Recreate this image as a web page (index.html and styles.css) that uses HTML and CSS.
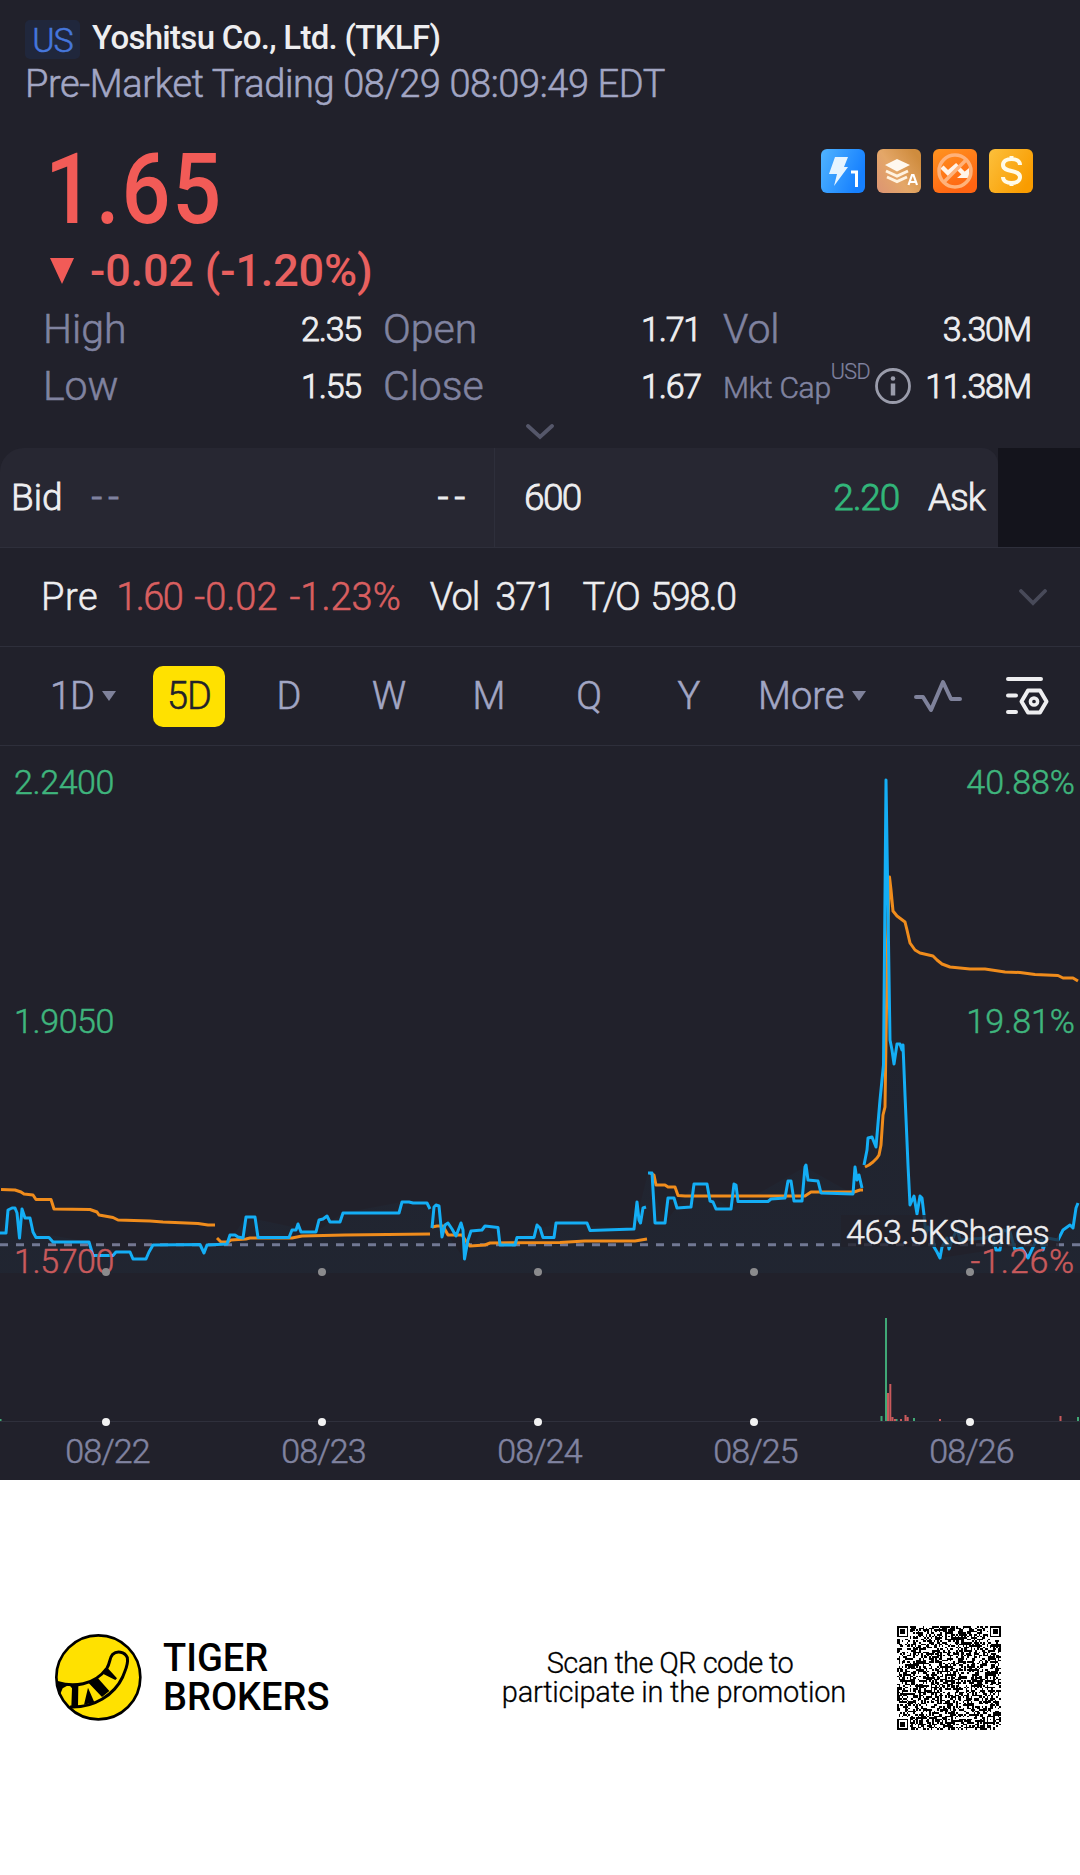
FILE: index.html
```
<!DOCTYPE html>
<html lang="en">
<head>
  <meta charset="UTF-8" />
  <meta name="viewport" content="width=device-width, initial-scale=1.0" />
  <title>Yoshitsu Co., Ltd. (TKLF)</title>
  <link rel="stylesheet" href="styles.css">
</head>
<body>
  <div class="app">
    <div class="header">
      <div class="title-row">
        <span class="market">US</span>
        <h1>Yoshitsu Co., Ltd. (TKLF)</h1>
      </div>
      <div class="session">Pre-Market Trading 08/29 08:09:49 EDT</div>
    </div>

    <div class="quote">
      <div>
        <div class="price">1.65</div>
        <div class="change">
          <svg width="24" height="26" viewBox="0 0 24 26"><path d="M0 0h24L12 26z" fill="#f25b57"/></svg>
          <span>-0.02 (-1.20%)</span>
        </div>
      </div>
      <div class="badges">
        <svg width="44" height="44" viewBox="0 0 44 44">
          <defs>
            <linearGradient id="blue" x1="0" y1="0" x2="1" y2=".4"><stop offset="0" stop-color="#50b4ff"/><stop offset="1" stop-color="#1680ff"/></linearGradient>
            <linearGradient id="tan" x1="0" y1="1" x2="1" y2=".3"><stop offset="0" stop-color="#dc9474"/><stop offset=".5" stop-color="#e4a768"/><stop offset="1" stop-color="#cf8c3e"/></linearGradient>
            <linearGradient id="orange" x1="0" y1="0" x2=".5" y2="1"><stop offset="0" stop-color="#ff9420"/><stop offset="1" stop-color="#ff6412"/></linearGradient>
            <linearGradient id="gold" x1="0" y1="0" x2="1" y2=".6"><stop offset="0" stop-color="#fcc03c"/><stop offset="1" stop-color="#f99c00"/></linearGradient>
          </defs>
          <rect width="44" height="44" rx="6" fill="url(#blue)"/>
          <path d="M14 8h13l-4 10h4L13 37l3-12H8z" fill="#e6f4ff"/>
          <path d="M30 23h5.500v15" fill="none" stroke="#fff" stroke-width="3"/>
        </svg>
        <svg width="44" height="44" viewBox="0 0 44 44">
          <rect width="44" height="44" rx="6" fill="url(#tan)"/>
          <path d="M20 10l13 6-13 6.500L8 16z" fill="#fff8ee"/>
          <path d="M9 22l11 5 11-5M10 28l10 4.500L30 28" fill="none" stroke="#fff2df" stroke-width="3"/>
          <path d="M31.500 36L35 26h1.500L40 36M33 33h6" fill="none" stroke="#fff" stroke-width="2.200"/>
        </svg>
        <svg width="44" height="44" viewBox="0 0 44 44">
          <rect width="44" height="44" rx="6" fill="url(#orange)"/>
          <path d="M9 18l6 6 8-7 8 8" fill="none" stroke="#fff3e8" stroke-width="4.500"/>
          <path d="M36 19v10H24z" fill="#fff3e8"/>
          <circle cx="22" cy="22" r="16" fill="none" stroke="#ffb27a" stroke-width="3.500"/>
          <path d="M33 11L11 33" stroke="#ffb27a" stroke-width="3.500"/>
        </svg>
        <svg width="44" height="44" viewBox="0 0 44 44">
          <rect width="44" height="44" rx="6" fill="url(#gold)"/>
          <path d="M31 16c0-4-4-6-8.500-6S14 12 14 16c0 8 17 4 17 12 0 4-4 6-8.500 6S14 32 14 28M22.500 7v4M22.500 33v4" fill="none" stroke="#fffbe8" stroke-width="4"/>
        </svg>
      </div>
    </div>

    <div class="stats">
      <div class="stat"><span class="label">High</span><span class="value">2.35</span></div>
      <div class="stat"><span class="label">Open</span><span class="value">1.71</span></div>
      <div class="stat"><span class="label">Vol</span><span class="value">3.30M</span></div>
      <div class="stat"><span class="label">Low</span><span class="value">1.55</span></div>
      <div class="stat"><span class="label">Close</span><span class="value">1.67</span></div>
      <div class="stat">
        <span class="label small">Mkt Cap</span><span class="unit">USD</span>
        <svg class="info" width="36" height="36" viewBox="0 0 36 36"><circle cx="18" cy="18" r="16.500" fill="none" stroke="#9a9cab" stroke-width="2.800"/><circle cx="18" cy="10.500" r="2.300" fill="#9a9cab"/><path d="M18 15.500v12" stroke="#9a9cab" stroke-width="4.500"/></svg>
        <span class="value">11.38M</span>
      </div>
    </div>
    <div class="expand">
      <svg width="28" height="16" viewBox="0 0 28 16"><path d="M2 2l12 11L26 2" fill="none" stroke="#55576a" stroke-width="3.800" stroke-linecap="round"/></svg>
    </div>

    <div class="book">
      <div class="side bid"><span>Bid</span><span class="dim dash">--</span><span class="push dash">--</span></div>
      <div class="side ask"><span class="tight">600</span><span class="push up">2.20</span><span class="ask-label">Ask</span></div>
    </div>

    <div class="pre">
      <span class="pre-label">Pre</span>
      <span class="down tight">1.60</span>
      <span class="down">-0.02</span>
      <span class="down">-1.23%</span>
      <span class="vol">Vol</span>
      <span class="vol-num">371</span>
      <span class="turnover">T/O</span>
      <span class="tight">598.0</span>
      <svg class="push" width="28" height="17" viewBox="0 0 28 17"><path d="M2 2l12 12L26 2" fill="none" stroke="#484a59" stroke-width="3.800" stroke-linecap="round"/></svg>
    </div>

    <div class="tabs">
      <div class="tab first">1D<i class="caret"></i></div>
      <div class="tab"><span class="active">5D</span></div>
      <div class="tab">D</div>
      <div class="tab">W</div>
      <div class="tab">M</div>
      <div class="tab">Q</div>
      <div class="tab">Y</div>
      <div class="tab more">More<i class="caret"></i></div>
      <svg class="wave" width="48" height="34" viewBox="0 0 48 34"><path d="M2 18h7l8 13L29 3l8 17h9" fill="none" stroke="#7f829b" stroke-width="4" stroke-linecap="round" stroke-linejoin="round"/></svg>
      <svg class="settings" width="44" height="40" viewBox="0 0 44 40"><g fill="none" stroke="#eeeef0" stroke-width="4" stroke-linecap="round" stroke-linejoin="round"><path d="M3 3h33M3 19.500h8M3 36h8"/><path d="M23 14.500h12l6.500 11-6.500 11H23l-6.500-11z"/><circle cx="29" cy="25.500" r="3.600" stroke-width="3.500"/></g></svg>
    </div>

    <svg class="chart" width="1080" height="734" viewBox="0 746 1080 734">
      <defs>
        <linearGradient id="fade" gradientUnits="userSpaceOnUse" x1="0" y1="780" x2="0" y2="1273"><stop offset="0" stop-color="#16b0f5" stop-opacity="0"/><stop offset="1" stop-color="#16b0f5" stop-opacity=".03"/></linearGradient>
      </defs>
      <path class="zero" d="M0 1244.700H1080"/>
      <path fill="url(#fade)" d="M0 1233L10 1208 33 1232 89 1242 146 1259 153 1245 227 1245 246 1217 316 1232 343 1213 402 1202 430 1209 464 1259 485 1226 500 1245 556 1223 634 1229 648 1173 665 1223 694 1184 731 1209 805 1167 853 1194 864 1165 880 1100 886 780 890 1040 903 1045 909 1192 926 1235 940 1258 1060 1240 1080 1203V1273H0z"/>
      <!-- average price, one path per session -->
      <g class="avg">
        <path d="M1 1189.500L15 1190 21 1192 24 1194 33 1195 36 1199.500 51 1199.500 54 1209 90 1209.500 97 1212 99 1215 113 1217.500 118 1220 150 1221 163 1222 198 1223.500 208 1225 215 1225"/>
        <path d="M217 1238L221 1242 228 1242 231 1240 246 1239 250 1238 292 1238 302 1236 345 1235 430 1234"/>
        <path d="M432 1227L437 1226 443 1226 448 1235 462 1235 466 1241 470 1246 485 1245 490 1243 560 1242.500 585 1241 635 1241 647 1239"/>
        <path d="M650 1173L654 1175 656 1185 665 1185 668 1187 675 1187 678 1195.500 685 1196 805 1196 811 1192 854 1192 860 1190 863 1190"/>
        <path d="M865 1167L869 1165 873 1162 877 1158 879 1155 881 1145 883 1115 885 1107 887.500 940 889.500 877 891 890 893 911 897 916 905 922 907 930 910 943 915 950 920 953 933 956 937 960 942 964 950 967 970 969 985 969 1005 972 1020 972.500 1035 974.500 1058 975.500 1063 978 1073 978 1078 981"/>
      </g>
      <g class="last">
        <path d="M0 1233L6 1233 8 1210 12 1208 15 1208 17 1213 19.500 1238 22 1209 25 1218 30 1218 33 1232 36 1237.500 49 1237.500 53 1242 89 1242 93 1255.500 113 1255.500 116 1252 130 1252 133 1259 146 1259 149 1252 153 1245 200 1244.500 204 1253 207 1245 227 1244 230 1235 235 1235 238 1237 243 1238 246 1217 255 1217 258 1237.500 289 1237.500 292 1230 296 1230 298 1224 301 1232 316 1232 319 1220 323 1219 327 1216 330 1222 340 1222 343 1213 399 1213 402 1202 409 1202 413 1203 427 1203 430 1209"/>
        <path d="M432 1228L434 1207 436 1205 439 1206 442 1237 445 1225 448 1223 452 1229 456 1236 461 1223 463 1230 464.500 1259 468 1240 471 1231 482 1230 485 1226 498 1227.500 500 1245 515 1245 517 1237.500 534 1237.500 537 1225 540 1228 543 1237.500 554 1237.500 556 1223 587 1223 590 1230.500 634 1229 637 1202 639 1220 640.500 1223 643 1208 646 1207"/>
        <path d="M648 1173L652 1173 655 1223 665 1223 668 1198 674 1198 677 1208 691 1207 694 1184 707 1184 710 1201 713 1202 716 1209 731 1209 734 1184 736 1185 738 1201.500 768 1201.500 771 1199 785 1198 788 1181 791 1181 794 1201 802 1201 805 1167 806 1165 808 1180 818 1181 821 1193 853 1194 855 1167 857 1180 859 1175 862 1188"/>
        <path d="M864 1165L867 1150 868 1138 872 1137 876 1147 880 1100 883.500 1065 886 780 890 1040 892 1050 894 1064 897 1044 900 1044 902 1050 903 1045 905 1095 908 1165 910 1205 914 1196 917 1214 920 1196 922 1198 924 1215 926 1235 928 1227 932 1232 934 1247 937 1252 940 1258 942 1247 947 1238 949 1249 953 1238 957 1229 960 1240 985 1238 993 1235 996 1250 1000 1250 1003 1230 1010 1232 1015 1250 1022 1248 1028 1258 1035 1243 1042 1240 1043 1250 1047 1238 1058 1240 1063 1230 1070 1225 1073 1228 1076 1208 1078 1203"/>
      </g>
      <rect x="841" y="1215" width="218" height="32" fill="#21212b" fill-opacity=".78"/>
      <g class="axis">
        <text class="up" x="14" y="794">2.2400</text>
        <text class="up" x="14" y="1033">1.9050</text>
        <text class="down" x="14" y="1273">1.5700</text>
        <text class="up end" x="1075" y="794">40.88%</text>
        <text class="up end" x="1075" y="1033">19.81%</text>
        <text class="down end wide" x="1075" y="1273">-1.26%</text>
        <text class="shares" x="846" y="1244">463.5KShares</text>
      </g>
      <path d="M0 1421.500H1080" stroke="#2f303c"/>
      <g fill="#8b8b8d">
        <circle cx="106" cy="1272" r="4"/><circle cx="322" cy="1272" r="4"/><circle cx="538" cy="1272" r="4"/><circle cx="754" cy="1272" r="4"/><circle cx="970" cy="1272" r="4"/>
      </g>
      <!-- volume -->
      <path d="M881.500 1421V1416M886 1421V1318M896.500 1421V1419M914 1421V1418M1078 1421V1417M.5 1421V1419" stroke="#40a876" stroke-width="2"/>
      <path d="M888 1421V1393M890.300 1421V1384M892.500 1421V1417M895 1421V1419M901 1421V1419M905.500 1421V1415M907.700 1421V1417M940 1421V1419M1060.500 1421V1416" stroke="#c95a5c" stroke-width="2"/>
      <g fill="#f2f2f2">
        <circle cx="106" cy="1422" r="4"/><circle cx="322" cy="1422" r="4"/><circle cx="538" cy="1422" r="4"/><circle cx="754" cy="1422" r="4"/><circle cx="970" cy="1422" r="4"/>
      </g>
      <g class="dates">
        <text x="107.500" y="1463">08/22</text>
        <text x="323.500" y="1463">08/23</text>
        <text x="539.500" y="1463">08/24</text>
        <text x="755.500" y="1463">08/25</text>
        <text x="971.500" y="1463">08/26</text>
      </g>
    </svg>
  </div>

  <div class="footer">
    <svg width="88" height="88" viewBox="47 43 264 264">
      <circle cx="177" cy="173" r="126" fill="#ffe100" stroke="#000" stroke-width="8"/>
      <path d="M54 188C100 203 165 198 203 145 213 129 210 115 220 104 232 93 256 95 264 114 268 135 258 150 250 172 225 225 165 265 92 262" fill="none" stroke="#000" stroke-width="9"/>
      <path d="M50 185L88 196 70 206 60 230zM88 194L117 196 116 262 96 262 98 206zM146 204L165 248 134 255zM148 190L176 176 210 214 188 232zM186 160L204 144 233 176 228 181z"/>
    </svg>
    <div class="brand"><p>TIGER</p><p>BROKERS</p></div>
    <div class="scan"><p class="first-line">Scan the QR code to</p><p>participate in the promotion</p></div>
    <svg id="qr" width="104" height="104" viewBox="0 0 65 65" shape-rendering="crispEdges"></svg>
  </div>

  <script>
    // 65x65 modules: finders in three corners, alignment marks on a grid, timing on row/col 6
    const N = 65;
    const marks = [6, 32, 58];
    let seed = 829;
    function rnd() {
      seed = (seed * 16807) % 2147483647;
      return seed / 2147483647;
    }
    function finder(x, y, cx, cy) {
      const d = Math.max(Math.abs(x - cx), Math.abs(y - cy));
      return d > 4 ? null : d < 2 || d === 3;
    }
    function dark(x, y) {
      for (const [cx, cy] of [[3, 3], [N - 4, 3], [3, N - 4]]) {
        const f = finder(x, y, cx, cy);
        if (f !== null) return f;
      }
      for (const cx of marks) for (const cy of marks) {
        const d = Math.max(Math.abs(x - cx), Math.abs(y - cy));
        if (d <= 2 && !(cx === 6 && cy !== 32) && !(cy === 6 && cx !== 32)) return d !== 1;
      }
      if (x === 6) return y % 2 === 0;
      if (y === 6) return x % 2 === 0;
      return rnd() < 0.5;
    }
    let d = '';
    for (let y = 0; y < N; y++) {
      for (let x = 0; x < N; x++) {
        if (dark(x, y)) d += `M${x} ${y}h1v1h-1z`;
      }
    }
    document.getElementById('qr').innerHTML = `<path d="${d}"/>`;
  </script>
</body>
</html>
```
FILE: styles.css
```
* { box-sizing: border-box; margin: 0; padding: 0; }
body {
  width: 1080px;
  font-family: Roboto, sans-serif;
  font-weight: 300;
  -webkit-text-stroke: 0.55px;
  background: #fff;
}
svg { display: block; flex: none; }
.app {
  height: 1480px;
  background: #21212b;
  color: #eeeef0;
}
.header {
  padding: 20px 25px 0;
}
.title-row {
  display: flex;
  gap: 12px;
}
.market {
  width: 55px;
  height: 39px;
  border-radius: 5px;
  background: #20273c;
  color: #4677dc;
  font-size: 34px;
  line-height: 41px;
  letter-spacing: -1px;
  text-align: center;
}
h1 {
  font-size: 33px;
  font-weight: 500;
  line-height: 35px;
  letter-spacing: -0.7px;
  -webkit-text-stroke: 0;
}
.session {
  margin-top: 6px;
  font-size: 38px;
  line-height: 38px;
  letter-spacing: -0.4px;
  color: #a2a6c4;
}
.quote {
  display: flex;
  justify-content: space-between;
  height: 197px;
  padding: 37px 47px 0 45px;
}
.price {
  font-size: 98px;
  font-weight: 500;
  line-height: 100px;
  letter-spacing: 2px;
  color: #f25b57;
  transform: scaleX(0.88);
  transform-origin: 0 50%;
  -webkit-text-stroke: 0;
}
.change {
  display: flex;
  align-items: center;
  gap: 16px;
  margin-top: 6px;
  padding-left: 5px;
  font-size: 45px;
  font-weight: 500;
  line-height: 50px;
  letter-spacing: -0.15px;
  color: #e8605f;
  -webkit-text-stroke: 0;
}
.badges {
  display: flex;
  gap: 12px;
  padding-top: 9px;
}
.stats {
  display: grid;
  grid-template-columns: 318px 318px 308px;
  column-gap: 22px;
  padding-left: 43px;
}
.stat {
  display: flex;
  align-items: center;
  height: 57px;
}
.label {
  font-size: 41px;
  color: #8083a0;
}
.label.small {
  font-size: 30px;
  padding-top: 3px;
  letter-spacing: -0.3px;
}
.unit {
  align-self: flex-start;
  padding-top: 2px;
  font-size: 21.5px;
  letter-spacing: -0.6px;
  color: #8083a0;
  -webkit-text-stroke: 0.2px;
}
.info { margin-left: 5px; }
.value {
  margin-left: auto;
  font-size: 34px;
  letter-spacing: -1.2px;
  -webkit-text-stroke: 0.9px;
}
.expand {
  display: flex;
  justify-content: center;
  height: 34px;
  padding-top: 10px;
}
.book {
  display: flex;
  height: 100px;
  padding-right: 82px;
  background: linear-gradient(90deg, #21212b 998px, #14141c 998px);
  border-bottom: 1px solid #2e2f3b;
  font-size: 37px;
  -webkit-text-stroke: 0.8px;
}
.side {
  display: flex;
  align-items: center;
  background: #272732;
}
.bid {
  width: 495px;
  padding: 0 23px 0 11px;
  border-right: 1px solid #2e2f3b;
  border-radius: 24px 0 0 0;
}
.ask {
  flex: 1;
  padding: 0 13px 0 29px;
  border-radius: 0 16px 0 0;
}
.ask-label {
  margin-left: 29px;
  letter-spacing: -1px;
}
.dim {
  margin-left: 29px;
  color: #8083a0;
}
.dash {
  letter-spacing: 6px;
  -webkit-text-stroke: 1.2px;
}
.push { margin-left: auto; }
.tight { letter-spacing: -1.6px; }
.up { color: #32b67a; fill: #3fb57d; }
.down { color: #d95f60; fill: #c95a5c; }
.book .up { letter-spacing: -1.2px; }
.pre {
  display: flex;
  align-items: center;
  height: 99px;
  padding: 0 33px 0 41px;
  border-bottom: 1px solid #2e2f3b;
  font-size: 38px;
}
.pre .down {
  margin-right: 12px;
}
.pre-label {
  margin-right: 18px;
  letter-spacing: 0.6px;
}
.vol {
  margin: 0 16px 0 17px;
  letter-spacing: -1px;
}
.vol-num {
  margin-right: 27px;
  letter-spacing: -1px;
}
.turnover {
  margin-right: 12px;
  letter-spacing: -2.6px;
}
.tabs {
  display: flex;
  align-items: center;
  height: 99px;
  padding: 0 31px 0 50px;
  border-bottom: 1px solid #2e2f3b;
  font-size: 38px;
  color: #a2a6c4;
}
.tab {
  display: flex;
  align-items: center;
  justify-content: center;
  width: 100px;
}
.tab.first {
  width: 89px;
  justify-content: flex-start;
  letter-spacing: -1px;
}
.tab.more {
  width: auto;
  margin-left: 19px;
}
.caret {
  margin-left: 8px;
  border: 7px solid transparent;
  border-top: 10px solid #7f829b;
  border-bottom: 0;
}
.active {
  width: 72px;
  border-radius: 10px;
  background: #ffe100;
  color: #21212b;
  line-height: 61px;
  letter-spacing: -1px;
  text-align: center;
}
.wave { margin-left: auto; }
.settings { margin-left: 43px; }
.zero {
  stroke: #747791;
  stroke-width: 3;
  stroke-dasharray: 8 8;
}
.avg path, .last path {
  fill: none;
  stroke-width: 3;
  stroke-linejoin: round;
}
.avg { stroke: #f08c1c; }
.last { stroke: #14aef5; }
.axis, .dates {
  font-size: 34px;
  letter-spacing: -0.4px;
  -webkit-text-stroke: 0;
}
.axis text, .dates text { stroke-width: 0.5px; }
.axis .up { stroke: #3fb57d; }
.axis .down { stroke: #c95a5c; }
.end {
  text-anchor: end;
  letter-spacing: 0;
}
.wide { letter-spacing: 0.8px; }
.axis .shares {
  fill: #eeeef0;
  stroke: #eeeef0;
}
.dates {
  fill: #8083a0;
  stroke: #8083a0;
  letter-spacing: -0.9px;
  text-anchor: middle;
}
.footer {
  display: flex;
  align-items: center;
  height: 395px;
  padding: 0 79px 0 55px;
  color: #000;
}
.brand {
  margin-left: 20px;
  font-size: 38px;
  font-weight: 500;
  line-height: 39px;
  -webkit-text-stroke: 0;
}
.scan {
  margin-left: auto;
  margin-right: 51px;
  padding-top: 1px;
  font-size: 29px;
  line-height: 29.5px;
  letter-spacing: -0.25px;
  text-align: center;
  -webkit-text-stroke: 0.3px;
}
.first-line {
  padding-right: 8px;
  letter-spacing: -0.6px;
}
```
